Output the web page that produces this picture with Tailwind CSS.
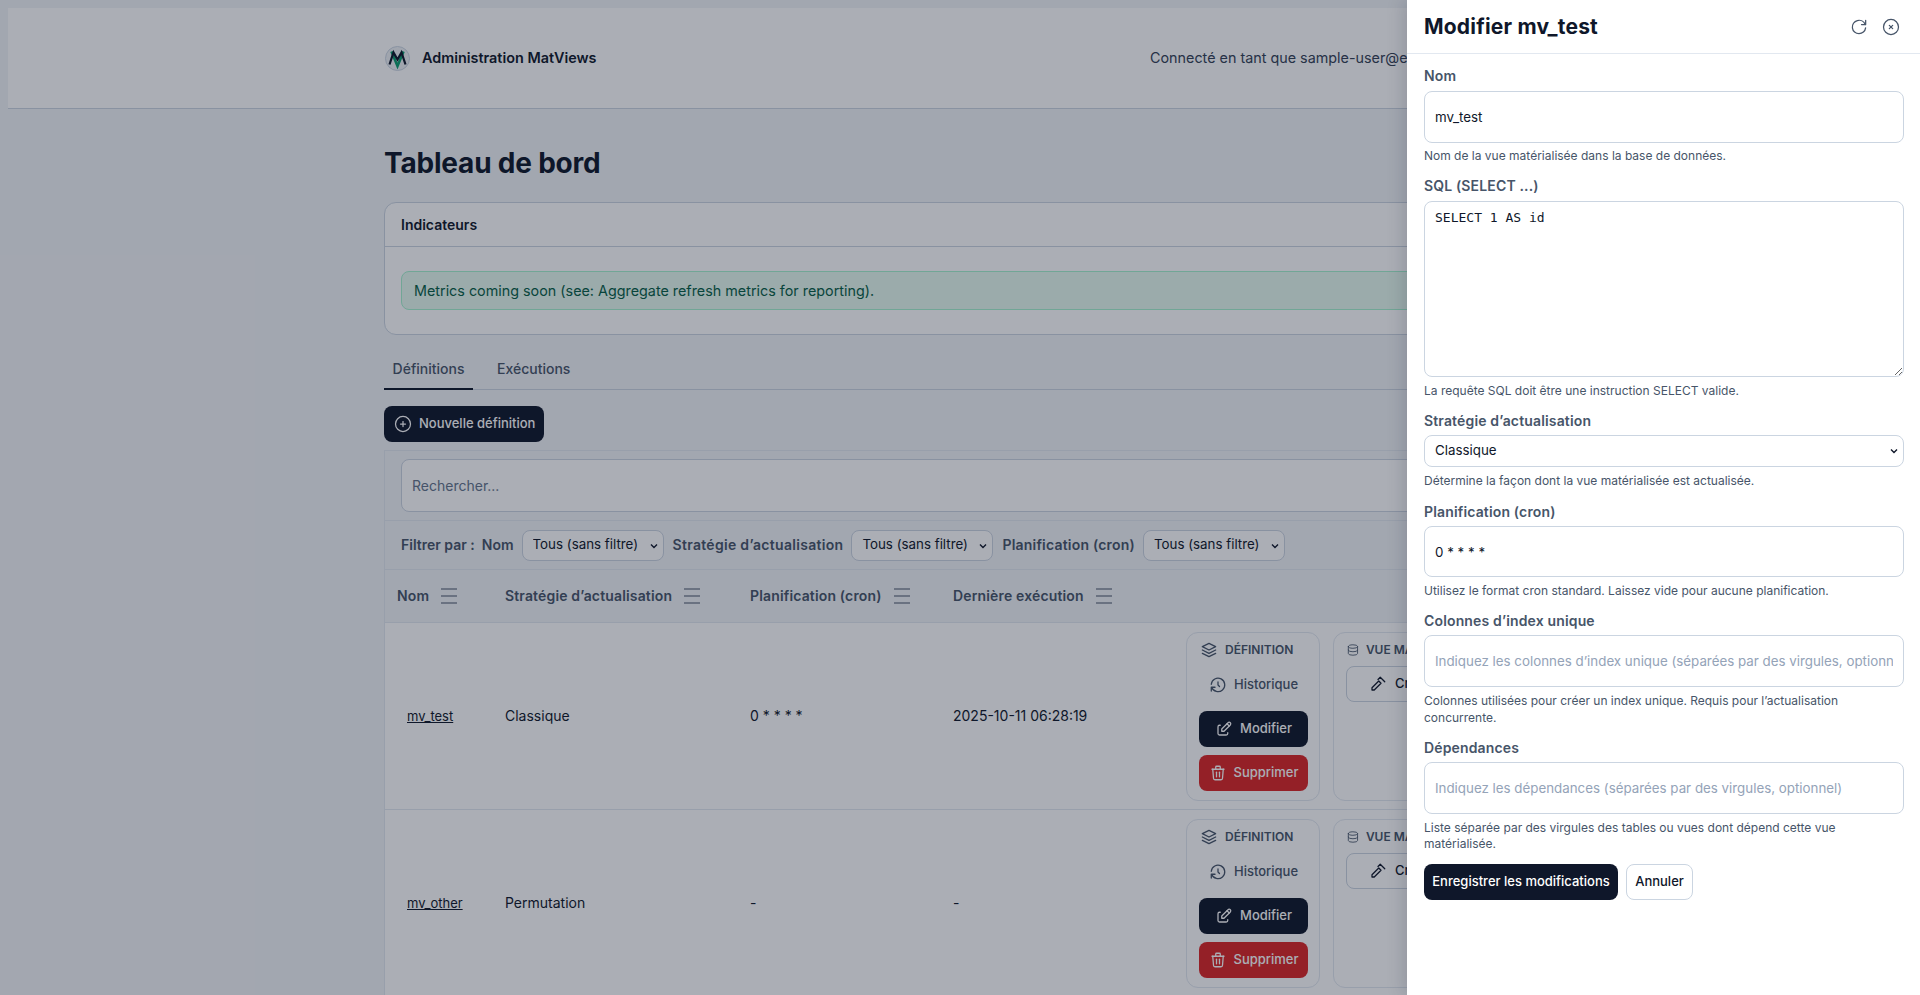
<!DOCTYPE html>
<html lang="fr">
<head>
    <meta charset="UTF-8">
    <meta name="viewport" content="width=device-width, initial-scale=1.0">
    <title>Administration MatViews</title>
    <script src="https://cdn.jsdelivr.net/npm/@tailwindcss/browser@4"></script>
</head>
<body class="relative h-[995px] overflow-hidden bg-[#f2f4f8] font-[Inter,sans-serif] text-[#0f172a]">
    <div class="p-2">
        <!-- top bar -->
        <header class="h-[101px] border-b border-[#cbd5e1] bg-white">
            <div class="mx-auto flex h-full w-[1152px] items-center justify-between">
                <div class="flex items-center gap-3">
                    <svg class="ml-px h-[25px] w-[25px]" viewBox="0 0 25 25" fill="none">
                        <circle cx="12.5" cy="12.5" r="12" fill="#eef1f5" stroke="#cbd5e1"/>
                        <path d="M6.5 5.5 12.5 20l6-14.5" stroke="#0b9d6f" stroke-width="2.6"/>
                        <path d="M4.5 18.5 8.5 6.5l4 7 4-7 4 12" stroke="#0f172a" stroke-width="2.2"/>
                    </svg>
                    <span class="text-[14.4px] font-semibold">Administration MatViews</span>
                </div>
                <div class="flex w-[386px] items-center gap-4 text-[14.35px] whitespace-nowrap text-[#334155]">
                    <span>Connecté en tant que sample-user@example.com</span>
                </div>
            </div>
        </header>

        <main class="mx-auto w-[1152px]">
            <h1 class="mt-[36px] text-[28px] leading-[36px] font-bold tracking-[-0.2px]">Tableau de bord</h1>

            <section class="mt-[21px] h-[133px] rounded-xl border border-[#cbd5e1] bg-white">
                <div class="flex h-[44px] items-center border-b border-[#cbd5e1] px-4 text-sm font-semibold">Indicateurs</div>
                <div class="px-4 pt-6">
                    <div class="flex h-[39px] items-center rounded-lg border border-[#a7f3d0] bg-[#e6faf0] px-3 text-[14.35px] text-[#065f46]">Metrics coming soon (see: Aggregate refresh metrics for reporting).</div>
                </div>
            </section>

            <nav class="mt-[18px] flex h-[37px] border-b border-[#cbd5e1] text-sm font-medium text-[#475569]">
                <a class="flex h-[37px] w-[89px] items-center justify-center border-b-2 border-[#0f172a] pb-[4px]">Définitions</a>
                <a class="ml-[16px] flex h-[36px] items-center px-2 pb-[4px]">Exécutions</a>
            </nav>

            <button class="mt-4 flex h-9 w-[160px] items-center gap-[6px] rounded-lg bg-[#0f172a] pl-[9px] text-[13px] font-medium text-white">
                <svg class="h-5 w-5" viewBox="0 0 24 24" fill="none" stroke="currentColor" stroke-width="1.5" stroke-linecap="round" stroke-linejoin="round"><path d="M3 12a9 9 0 1 0 18 0a9 9 0 1 0 -18 0"/><path d="M9 12h6"/><path d="M12 9v6"/></svg>
                Nouvelle définition
            </button>

            <section class="mt-2 border-x border-t border-[#e2e8f0]">
                <div class="flex h-[70px] items-center border-b border-[#e2e8f0] pr-4 pl-4">
                    <input class="h-[53px] w-full rounded-lg border border-[#cbd5e1] bg-white px-[10px] text-sm placeholder:text-[#64748b]" placeholder="Rechercher...">
                </div>
                <div class="flex h-[49px] items-center border-b border-[#e2e8f0] pl-4 text-sm font-semibold whitespace-nowrap text-[#475569]">
                    <span>Filtrer par :</span>
                    <span class="ml-[7px]">Nom</span>
                    <div class="relative ml-2 w-[142px] shrink-0">
                        <select class="block h-[31px] w-full appearance-none rounded-lg border border-[#cbd5e1] bg-white pl-[10px] text-[13.33px] font-normal text-[#0f172a]"><option>Tous (sans filtre)</option></select>
                        <svg class="pointer-events-none absolute top-[12px] right-[6px] h-2 w-2" viewBox="0 0 8 8" fill="none" stroke="#0f172a" stroke-width="1.4"><path d="M1 2.5 4 5.5l3-3"/></svg>
                    </div>
                    <span class="ml-[9px] tracking-[0.3px]">Stratégie d’actualisation</span>
                    <div class="relative ml-2 w-[142px] shrink-0">
                        <select class="block h-[31px] w-full appearance-none rounded-lg border border-[#cbd5e1] bg-white pl-[10px] text-[13.33px] font-normal text-[#0f172a]"><option>Tous (sans filtre)</option></select>
                        <svg class="pointer-events-none absolute top-[12px] right-[6px] h-2 w-2" viewBox="0 0 8 8" fill="none" stroke="#0f172a" stroke-width="1.4"><path d="M1 2.5 4 5.5l3-3"/></svg>
                    </div>
                    <span class="ml-[9px] tracking-[0.2px]">Planification (cron)</span>
                    <div class="relative ml-2 w-[142px] shrink-0">
                        <select class="block h-[31px] w-full appearance-none rounded-lg border border-[#cbd5e1] bg-white pl-[10px] text-[13.33px] font-normal text-[#0f172a]"><option>Tous (sans filtre)</option></select>
                        <svg class="pointer-events-none absolute top-[12px] right-[6px] h-2 w-2" viewBox="0 0 8 8" fill="none" stroke="#0f172a" stroke-width="1.4"><path d="M1 2.5 4 5.5l3-3"/></svg>
                    </div>
                </div>

                <!-- table head -->
                <div class="grid h-[53px] grid-cols-[108px_245px_203px_233px_1fr] items-center border-b border-[#e2e8f0] pl-3 text-sm font-semibold tracking-[0.15px] text-[#475569]">
                    <div class="flex items-center gap-[12px]">Nom
                        <span class="flex h-[16px] w-[16px] flex-col justify-between"><i class="h-[2px] bg-[#9ca3af]"></i><i class="h-[2px] bg-[#9ca3af]"></i><i class="h-[2px] bg-[#9ca3af]"></i></span>
                    </div>
                    <div class="flex items-center gap-[12px]">Stratégie d’actualisation
                        <span class="flex h-[16px] w-[16px] flex-col justify-between"><i class="h-[2px] bg-[#9ca3af]"></i><i class="h-[2px] bg-[#9ca3af]"></i><i class="h-[2px] bg-[#9ca3af]"></i></span>
                    </div>
                    <div class="flex items-center gap-[12px]">Planification (cron)
                        <span class="flex h-[16px] w-[16px] flex-col justify-between"><i class="h-[2px] bg-[#9ca3af]"></i><i class="h-[2px] bg-[#9ca3af]"></i><i class="h-[2px] bg-[#9ca3af]"></i></span>
                    </div>
                    <div class="flex items-center gap-[12px]">Dernière exécution
                        <span class="flex h-[16px] w-[16px] flex-col justify-between"><i class="h-[2px] bg-[#9ca3af]"></i><i class="h-[2px] bg-[#9ca3af]"></i><i class="h-[2px] bg-[#9ca3af]"></i></span>
                    </div>
                    <div></div>
                </div>

                <!-- row 1 -->
                <div class="grid h-[187px] grid-cols-[108px_245px_203px_233px_1fr] items-center border-b border-[#e2e8f0] bg-white pl-3 text-sm">
                    <a class="pl-[10px] text-[13px] underline">mv_test</a>
                    <div>Classique</div>
                    <div>0 * * * *</div>
                    <div>2025-10-11 06:28:19</div>
                    <div class="flex gap-[13px]">
                        <div class="h-[169px] w-[134px] shrink-0 rounded-xl border border-[#e2e8f0] px-3 pt-[8px]">
                            <div class="flex h-[18px] items-center gap-[6px] text-xs font-semibold text-[#475569]">
                                <svg class="h-5 w-5" viewBox="0 0 24 24" fill="none" stroke="currentColor" stroke-width="1.5" stroke-linecap="round" stroke-linejoin="round"><path d="M12 4l-8 4l8 4l8 -4l-8 -4"/><path d="M4 12l8 4l8 -4"/><path d="M4 16l8 4l8 -4"/></svg>
                                DÉFINITION
                            </div>
                            <div class="mt-[8px] flex h-[36px] items-center gap-[7px] pl-[10px] text-[13px] font-medium text-[#475569]">
                                <svg class="h-[18px] w-[18px]" viewBox="0 0 24 24" fill="none" stroke="currentColor" stroke-width="1.7" stroke-linecap="round" stroke-linejoin="round"><path d="M12 8l0 4l2 2"/><path d="M3.05 11a9 9 0 1 1 .5 4m-.5 5v-5h5"/></svg>
                                Historique
                            </div>
                            <button class="mt-[8px] flex h-9 w-[109px] items-center justify-center gap-[7px] rounded-lg bg-[#0f172a] text-[13px] font-medium text-white">
                                <svg class="h-[18px] w-[18px]" viewBox="0 0 24 24" fill="none" stroke="currentColor" stroke-width="1.7" stroke-linecap="round" stroke-linejoin="round"><path d="M7 7h-1a2 2 0 0 0 -2 2v9a2 2 0 0 0 2 2h9a2 2 0 0 0 2 -2v-1"/><path d="M20.385 6.585a2.1 2.1 0 0 0 -2.97 -2.97l-8.415 8.385v3h3l8.385 -8.415z"/><path d="M16 5l3 3"/></svg>
                                Modifier
                            </button>
                            <button class="mt-2 flex h-9 w-[109px] items-center justify-center gap-[7px] rounded-lg bg-[#dc2626] text-[13px] font-medium text-white">
                                <svg class="h-[18px] w-[18px]" viewBox="0 0 24 24" fill="none" stroke="currentColor" stroke-width="1.7" stroke-linecap="round" stroke-linejoin="round"><path d="M4 7l16 0"/><path d="M10 11l0 6"/><path d="M14 11l0 6"/><path d="M5 7l1 12a2 2 0 0 0 2 2h8a2 2 0 0 0 2 -2l1 -12"/><path d="M9 7v-3a1 1 0 0 1 1 -1h4a1 1 0 0 1 1 1v3"/></svg>
                                Supprimer
                            </button>
                        </div>
                        <div class="h-[169px] w-[160px] shrink-0 rounded-xl border border-[#e2e8f0] px-3 pt-[8px]">
                            <div class="flex h-[18px] items-center gap-[6px] text-xs font-semibold whitespace-nowrap text-[#475569]">
                                <svg class="h-5 w-5" viewBox="0 0 24 24" fill="none" stroke="currentColor" stroke-width="1.5" stroke-linecap="round" stroke-linejoin="round"><path d="M12 6m-8 0a8 3 0 1 0 16 0a8 3 0 1 0 -16 0"/><path d="M4 6v6a8 3 0 0 0 16 0v-6"/><path d="M4 12v6a8 3 0 0 0 16 0v-6"/></svg>
                                VUE MATÉRIALISÉE
                            </div>
                            <button class="mt-[7px] flex h-9 w-[134px] items-center gap-2 rounded-lg border border-[#cbd5e1] pl-[22px] text-[13px] font-medium">
                                <svg class="h-[18px] w-[18px]" viewBox="0 0 24 24" fill="none" stroke="currentColor" stroke-width="1.7" stroke-linecap="round" stroke-linejoin="round"><path d="M4 20v-3l9-9 3 3-9 9z"/><path d="M12 6l3-3 6 6"/></svg>
                                Créer
                            </button>
                        </div>
                    </div>
                </div>

                <!-- row 2 -->
                <div class="grid h-[187px] grid-cols-[108px_245px_203px_233px_1fr] items-center border-b border-[#e2e8f0] bg-white pl-3 text-sm">
                    <a class="pl-[10px] text-[13px] underline">mv_other</a>
                    <div>Permutation</div>
                    <div>-</div>
                    <div>-</div>
                    <div class="flex gap-[13px]">
                        <div class="h-[169px] w-[134px] shrink-0 rounded-xl border border-[#e2e8f0] px-3 pt-[8px]">
                            <div class="flex h-[18px] items-center gap-[6px] text-xs font-semibold text-[#475569]">
                                <svg class="h-5 w-5" viewBox="0 0 24 24" fill="none" stroke="currentColor" stroke-width="1.5" stroke-linecap="round" stroke-linejoin="round"><path d="M12 4l-8 4l8 4l8 -4l-8 -4"/><path d="M4 12l8 4l8 -4"/><path d="M4 16l8 4l8 -4"/></svg>
                                DÉFINITION
                            </div>
                            <div class="mt-[8px] flex h-[36px] items-center gap-[7px] pl-[10px] text-[13px] font-medium text-[#475569]">
                                <svg class="h-[18px] w-[18px]" viewBox="0 0 24 24" fill="none" stroke="currentColor" stroke-width="1.7" stroke-linecap="round" stroke-linejoin="round"><path d="M12 8l0 4l2 2"/><path d="M3.05 11a9 9 0 1 1 .5 4m-.5 5v-5h5"/></svg>
                                Historique
                            </div>
                            <button class="mt-[8px] flex h-9 w-[109px] items-center justify-center gap-[7px] rounded-lg bg-[#0f172a] text-[13px] font-medium text-white">
                                <svg class="h-[18px] w-[18px]" viewBox="0 0 24 24" fill="none" stroke="currentColor" stroke-width="1.7" stroke-linecap="round" stroke-linejoin="round"><path d="M7 7h-1a2 2 0 0 0 -2 2v9a2 2 0 0 0 2 2h9a2 2 0 0 0 2 -2v-1"/><path d="M20.385 6.585a2.1 2.1 0 0 0 -2.97 -2.97l-8.415 8.385v3h3l8.385 -8.415z"/><path d="M16 5l3 3"/></svg>
                                Modifier
                            </button>
                            <button class="mt-2 flex h-9 w-[109px] items-center justify-center gap-[7px] rounded-lg bg-[#dc2626] text-[13px] font-medium text-white">
                                <svg class="h-[18px] w-[18px]" viewBox="0 0 24 24" fill="none" stroke="currentColor" stroke-width="1.7" stroke-linecap="round" stroke-linejoin="round"><path d="M4 7l16 0"/><path d="M10 11l0 6"/><path d="M14 11l0 6"/><path d="M5 7l1 12a2 2 0 0 0 2 2h8a2 2 0 0 0 2 -2l1 -12"/><path d="M9 7v-3a1 1 0 0 1 1 -1h4a1 1 0 0 1 1 1v3"/></svg>
                                Supprimer
                            </button>
                        </div>
                        <div class="h-[169px] w-[160px] shrink-0 rounded-xl border border-[#e2e8f0] px-3 pt-[8px]">
                            <div class="flex h-[18px] items-center gap-[6px] text-xs font-semibold whitespace-nowrap text-[#475569]">
                                <svg class="h-5 w-5" viewBox="0 0 24 24" fill="none" stroke="currentColor" stroke-width="1.5" stroke-linecap="round" stroke-linejoin="round"><path d="M12 6m-8 0a8 3 0 1 0 16 0a8 3 0 1 0 -16 0"/><path d="M4 6v6a8 3 0 0 0 16 0v-6"/><path d="M4 12v6a8 3 0 0 0 16 0v-6"/></svg>
                                VUE MATÉRIALISÉE
                            </div>
                            <button class="mt-[7px] flex h-9 w-[134px] items-center gap-2 rounded-lg border border-[#cbd5e1] pl-[22px] text-[13px] font-medium">
                                <svg class="h-[18px] w-[18px]" viewBox="0 0 24 24" fill="none" stroke="currentColor" stroke-width="1.7" stroke-linecap="round" stroke-linejoin="round"><path d="M4 20v-3l9-9 3 3-9 9z"/><path d="M12 6l3-3 6 6"/></svg>
                                Créer
                            </button>
                        </div>
                    </div>
                </div>
            </section>
        </main>
    </div>

    <!-- drawer backdrop -->
    <div class="absolute inset-0 bg-[#0f172a]/35"></div>

    <!-- edit drawer -->
    <aside class="absolute inset-y-0 right-0 w-[513px] bg-white shadow-[-4px_0_16px_rgba(15,23,42,0.15)]">
        <div class="flex h-[54px] items-center justify-between border-b border-[#e2e8f0] pr-[19px] pl-[17px]">
            <h2 class="text-[21px] font-bold tracking-[0.2px]">Modifier mv_test</h2>
            <div class="flex items-center gap-[12px] text-[#475569]">
                <svg class="h-5 w-5" viewBox="0 0 24 24" fill="none" stroke="currentColor" stroke-width="1.5" stroke-linecap="round" stroke-linejoin="round"><path d="M19.933 13.041a8 8 0 1 1 -9.925 -8.788c3.899 -1 7.935 1.007 9.425 4.747"/><path d="M20 4v5h-5"/></svg>
                <svg class="h-5 w-5" viewBox="0 0 24 24" fill="none" stroke="currentColor" stroke-width="1.5" stroke-linecap="round" stroke-linejoin="round"><path d="M3 12a9 9 0 1 0 18 0a9 9 0 1 0 -18 0"/><path d="M10 10l4 4m0 -4l-4 4"/></svg>
            </div>
        </div>
        <form class="pt-[13px] pr-4 pl-[17px]">
            <label class="block text-sm leading-[18px] font-semibold tracking-[0.15px] text-[#475569]">Nom</label>
            <input class="mt-[6px] block h-[52px] w-full rounded-lg border border-[#cbd5e1] px-[10px] text-[13.33px]" value="mv_test">
            <p class="mt-[5px] text-xs leading-4 text-[#475569]">Nom de la vue matérialisée dans la base de données.</p>

            <label class="mt-[13px] block text-sm leading-[18px] font-semibold tracking-[0.15px] text-[#475569]">SQL (SELECT ...)</label>
            <textarea class="mt-[6px] block h-[176px] w-full rounded-lg border border-[#cbd5e1] px-[10px] py-[7px] font-['DejaVu_Sans_Mono',monospace] text-[13px] leading-[18px]">SELECT 1 AS id</textarea>
            <p class="mt-[6px] text-xs leading-4 text-[#475569]">La requête SQL doit être une instruction SELECT valide.</p>

            <label class="mt-[13px] block text-sm leading-[18px] font-semibold tracking-[0.15px] text-[#475569]">Stratégie d’actualisation</label>
            <div class="relative mt-[5px]">
                <select class="block h-[32px] w-full appearance-none rounded-lg border border-[#cbd5e1] pl-[10px] text-[13.33px]"><option>Classique</option></select>
                <svg class="pointer-events-none absolute top-[12px] right-[6px] h-2 w-2" viewBox="0 0 8 8" fill="none" stroke="#0f172a" stroke-width="1.4"><path d="M1 2.5 4 5.5l3-3"/></svg>
            </div>
            <p class="mt-[6px] text-xs leading-4 text-[#475569]">Détermine la façon dont la vue matérialisée est actualisée.</p>

            <label class="mt-[14px] block text-sm leading-[18px] font-semibold tracking-[0.15px] text-[#475569]">Planification (cron)</label>
            <input class="mt-[5px] block h-[51px] w-full rounded-lg border border-[#cbd5e1] px-[10px] text-[13.33px]" value="0 * * * *">
            <p class="mt-[6px] text-xs leading-4 text-[#475569]">Utilisez le format cron standard. Laissez vide pour aucune planification.</p>

            <label class="mt-[13px] block text-sm leading-[18px] font-semibold tracking-[0.15px] text-[#475569]">Colonnes d’index unique</label>
            <input class="mt-[5px] block h-[52px] w-full rounded-lg border border-[#cbd5e1] px-[10px] text-[13.33px] placeholder:text-[#94a3b8]" placeholder="Indiquez les colonnes d’index unique (séparées par des virgules, optionnel)">
            <p class="mt-[5px] text-xs leading-[17px] text-[#475569]">Colonnes utilisées pour créer un index unique. Requis pour l’actualisation concurrente.</p>

            <label class="mt-[13px] block text-sm leading-[18px] font-semibold tracking-[0.15px] text-[#475569]">Dépendances</label>
            <input class="mt-[5px] block h-[52px] w-full rounded-lg border border-[#cbd5e1] px-[10px] text-[13.33px] placeholder:text-[#94a3b8]" placeholder="Indiquez les dépendances (séparées par des virgules, optionnel)">
            <p class="mt-[6px] text-xs leading-4 text-[#475569]">Liste séparée par des virgules des tables ou vues dont dépend cette vue matérialisée.</p>

            <div class="mt-[12px] flex gap-2">
                <button type="button" class="h-9 w-[194px] rounded-lg bg-[#0f172a] text-[13px] font-medium text-white">Enregistrer les modifications</button>
                <button type="button" class="h-9 w-[67px] rounded-lg border border-[#cbd5e1] text-[13px] font-medium">Annuler</button>
            </div>
        </form>
    </aside>
</body>
</html>
